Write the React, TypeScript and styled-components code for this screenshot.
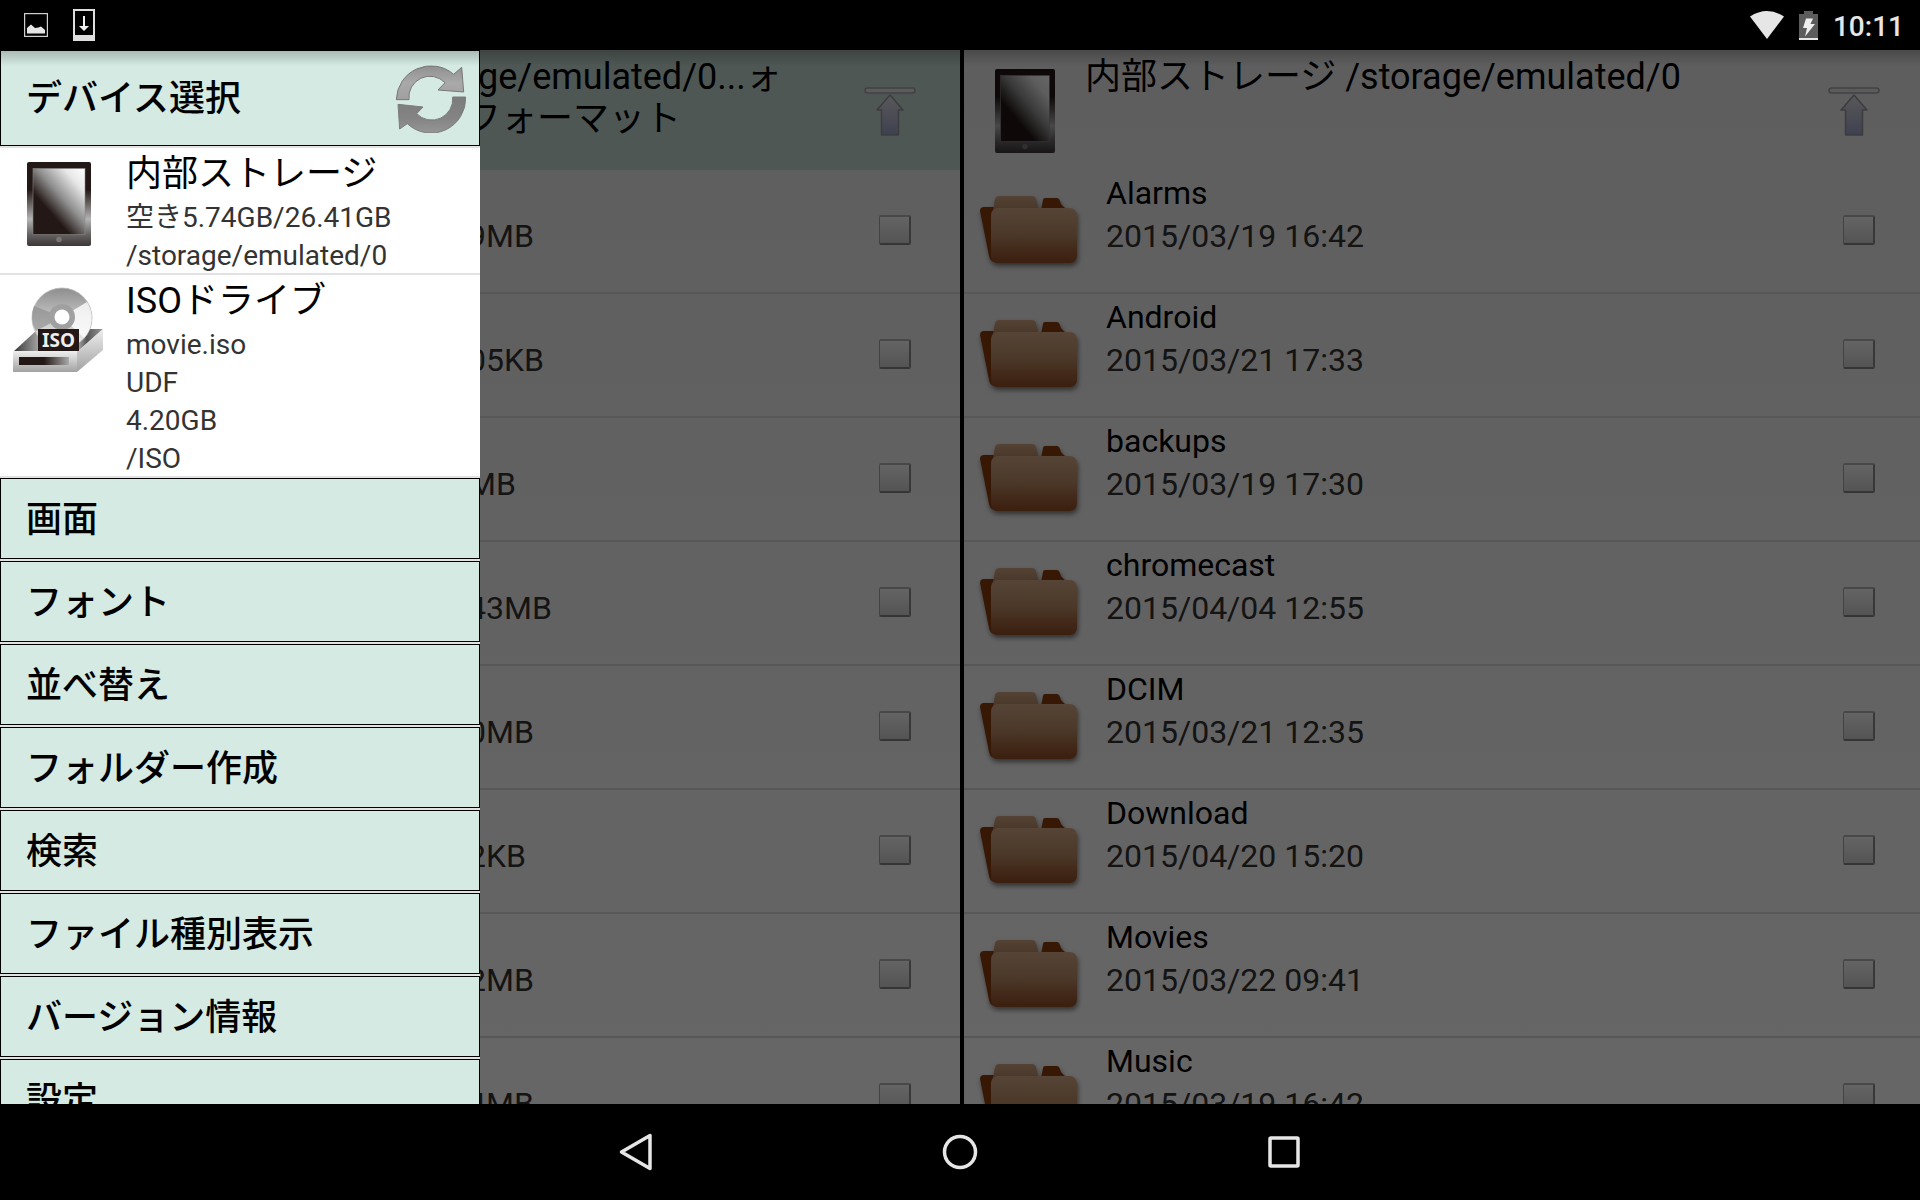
import React from "react";
import styled, { createGlobalStyle } from "styled-components";

const GlobalStyle = createGlobalStyle`
  * { box-sizing: border-box; }
  body { margin: 0; background: #000; overflow: hidden; }
  button { font: inherit; color: inherit; text-align: left; border: 0; padding: 0; background: none; }
`;

const Screen = styled.div`
  display: flex;
  flex-direction: column;
  height: 100vh;
  overflow: hidden;
  background: #000;
  color: #000;
  font-family: Roboto, "Noto Sans CJK JP", sans-serif;
`;

const StatusBar = styled.header`
  flex: none;
  display: flex;
  align-items: center;
  justify-content: space-between;
  height: 50px;
  padding: 0 16px 0 24px;
  color: #e6e6e6;
`;

const StatusGroup = styled.div<{ $gap: number }>`
  display: flex;
  align-items: center;
  gap: ${(p) => p.$gap}px;
  svg { display: block; }
`;

const Clock = styled.time`
  padding-top: 4px;
  font-size: 28px;
  line-height: 32px;
  font-weight: 500;
`;

const Stage = styled.main`
  position: relative;
  flex: 1;
  min-height: 0;
  display: flex;
  overflow: hidden;
  background: linear-gradient(#ebebeb, #fff);
`;

const Panel = styled.section<{ $divider?: boolean }>`
  flex: none;
  width: 50%;
  border-left: ${(p) => (p.$divider ? "4px solid #000" : "0")};
`;

const PanelHead = styled.div<{ $active?: boolean; $edge: number }>`
  display: flex;
  align-items: flex-start;
  height: 120px;
  padding-right: ${(p) => p.$edge - 4}px;
  background: ${(p) => (p.$active ? "#c4d9d1" : "transparent")};
`;

const HeadIcon = styled.div`
  flex: none;
  width: 121px;
  padding: 19px 0 0 31px;
`;

const HeadTitle = styled.h1<{ $covered?: boolean }>`
  flex: 1;
  margin: 0;
  padding-top: 6px;
  padding-left: ${(p) => (p.$covered ? "calc(25vw - 15px)" : "0")};
  text-indent: ${(p) => (p.$covered ? "13px" : "0")};
  font-size: 36px;
  line-height: 42px;
  font-weight: 400;
`;

const UpButton = styled.button`
  flex: none;
  margin-top: 36px;
  svg { display: block; }
`;

const List = styled.ul`
  list-style: none;
  margin: 0;
  padding: 0;
`;

const Row = styled.li<{ $edge: number }>`
  display: flex;
  align-items: flex-start;
  height: 124px;
  padding-right: ${(p) => p.$edge}px;
  border-bottom: 2px solid #dadada;
`;

const RowIcon = styled.div`
  flex: none;
  width: 142px;
  padding: 20px 0 0 11px;
`;

const RowText = styled.div<{ $covered?: boolean }>`
  flex: 1;
  padding-left: ${(p) => (p.$covered ? "calc(25vw - 12px)" : "0")};
  padding-top: ${(p) => (p.$covered ? 46 : 0)}px;
  font-size: 32px;
`;

const RowName = styled.div`
  line-height: 46px;
`;

const RowMeta = styled.div`
  color: #333;
  line-height: 40px;
`;

const Check = styled.input`
  appearance: none;
  flex: none;
  width: 32px;
  height: 30px;
  margin: 45px 0 0;
  border: 1px solid #a8a8a8;
  border-top: 2px solid #b4b4b4;
  border-right: 2px solid #8c8c8c;
  border-bottom: 2px solid #858585;
  border-radius: 2px;
  background: linear-gradient(#fafafa, #d2d2d2);
`;

const Scrim = styled.div`
  position: absolute;
  inset: 0;
  background: rgba(0, 0, 0, 0.6);
`;

const BarShadow = styled.div`
  position: absolute;
  inset: 0 0 auto;
  height: 16px;
  pointer-events: none;
  background: linear-gradient(rgba(0, 0, 0, 0.22), rgba(0, 0, 0, 0));
`;

const Drawer = styled.nav`
  position: absolute;
  inset: 0 auto 0 0;
  display: flex;
  flex-direction: column;
  width: 25%;
  overflow: hidden;
  background: #fff;
`;

const Divided = styled.div`
  flex: none;
  border-bottom: 2px solid #e2e2e4;
`;

const SectionHead = styled.div`
  display: flex;
  align-items: center;
  justify-content: space-between;
  height: 96px;
  padding: 0 12px 0 25px;
  border: 1px solid #000;
  background: #d4eae2;
  font-size: 36px;
  font-weight: 500;
  line-height: 44px;
  span { padding-top: 2px; }
  svg { display: block; }
`;

const MenuButton = styled.button`
  display: block;
  width: 100%;
  height: 81px;
  padding: 2px 25px 0;
  border: 1px solid #000;
  background: #d4eae2;
  font-size: 36px;
  font-weight: 500;
  line-height: 44px;
`;

const DeviceButton = styled.button`
  display: flex;
  align-items: flex-start;
  width: 100%;
`;

const DeviceIcon = styled.span<{ $inset: number }>`
  flex: none;
  width: 126px;
  padding: ${(p) => (p.$inset > 20 ? 14 : 10)}px 0 0 ${(p) => p.$inset}px;
  svg { display: block; }
`;

const DeviceText = styled.span`
  display: block;
  padding-top: 4px;
  margin-bottom: -2px;
`;

const DeviceName = styled.span`
  display: block;
  margin-bottom: 3px;
  font-size: 36px;
  line-height: 44px;
`;

const DeviceLine = styled.span`
  display: block;
  color: #333;
  font-size: 28px;
  line-height: 38px;
`;

const NavBar = styled.footer`
  flex: none;
  display: flex;
  align-items: center;
  justify-content: center;
  height: 96px;
`;

const NavButton = styled.button`
  display: flex;
  justify-content: center;
  width: 324px;
  svg { display: block; }
`;

function PictureIcon() {
  return (
    <svg width="24" height="24" viewBox="0 0 24 24" aria-hidden="true">
      <rect x="0.5" y="0.5" width="23" height="23" fill="none" stroke="#cfcfcf" strokeWidth="1.4" />
      <path d="M3 20.500V15L7 11.500L11 15L14.500 14.500L17 13.500L21 17V20.500Z" fill="#e6e6e6" />
    </svg>
  );
}

function DownloadIcon() {
  return (
    <svg width="22" height="32" viewBox="0 0 22 32" aria-hidden="true">
      <path d="M0 0H22V32H0Z M2 2V26H20V2Z" fillRule="evenodd" fill="#dedede" />
      <path d="M10 7H12V17H16L11 22L6 17H10Z" fill="#f0f0f0" />
    </svg>
  );
}

function WifiIcon() {
  return (
    <svg width="34" height="28" viewBox="0 0 34 28" aria-hidden="true">
      <path d="M0 5.500Q17 -5.500 34 5.500L17 28Z" fill="#e6e6e6" />
    </svg>
  );
}

function BatteryIcon() {
  return (
    <svg width="19" height="29" viewBox="0 0 19 29" aria-hidden="true">
      <path d="M5 0H14V3H19V29H0V3H5Z" fill="#5c5c5c" />
      <path d="M0 27H19V29H0Z" fill="#e6e6e6" />
      <path d="M7 7.500H14L11.500 13H16L6 25.500L8 17H4Z" fill="#eee" />
    </svg>
  );
}

function TabletIcon({ width }: { width: number }) {
  return (
    <svg width={width} height="84" viewBox="0 0 64 84" preserveAspectRatio="none" aria-hidden="true">
      <defs>
        <linearGradient id="tabletBody" x1="0" y1="0" x2="0" y2="1">
          <stop offset="0" stopColor="#231815" />
          <stop offset="0.33" stopColor="#231815" />
          <stop offset="0.68" stopColor="#b4b4b4" />
          <stop offset="0.86" stopColor="#686464" />
          <stop offset="1" stopColor="#3c3636" />
        </linearGradient>
        <linearGradient id="tabletGlass" x1="1" y1="0" x2="0.1" y2="1">
          <stop offset="0" stopColor="#fff" />
          <stop offset="0.2" stopColor="#e8e8e8" />
          <stop offset="0.46" stopColor="#8f8f8f" />
          <stop offset="0.7" stopColor="#231815" />
          <stop offset="1" stopColor="#231815" />
        </linearGradient>
      </defs>
      <rect width="64" height="84" rx="2" fill="url(#tabletBody)" />
      <rect x="6" y="6.500" width="52" height="66" fill="url(#tabletGlass)" stroke="#888" strokeWidth="0.6" />
      <circle cx="32" cy="77.500" r="2.800" fill="#7a7676" />
    </svg>
  );
}

function IsoIcon() {
  return (
    <svg width="94" height="90" viewBox="0 0 94 90" aria-hidden="true">
      <defs>
        <linearGradient id="disc" x1="0" y1="0" x2="0" y2="1">
          <stop offset="0" stopColor="#8e8e8e" />
          <stop offset="0.5" stopColor="#c4c4c4" />
          <stop offset="1" stopColor="#f4f4f4" />
        </linearGradient>
        <linearGradient id="driveFront" x1="0" y1="0" x2="0" y2="1">
          <stop offset="0" stopColor="#eee" />
          <stop offset="1" stopColor="#a2a2a2" />
        </linearGradient>
        <linearGradient id="driveSlot" x1="0" y1="0" x2="1" y2="0">
          <stop offset="0" stopColor="#231815" />
          <stop offset="0.5" stopColor="#231815" />
          <stop offset="1" stopColor="#aaa" />
        </linearGradient>
        <linearGradient id="driveTop" x1="0" y1="0" x2="1" y2="0">
          <stop offset="0" stopColor="#333" />
          <stop offset="0.3" stopColor="#aaa" />
          <stop offset="0.68" stopColor="#ccc" />
          <stop offset="0.82" stopColor="#555" />
          <stop offset="1" stopColor="#999" />
        </linearGradient>
      </defs>
      <path d="M3 67L28 44H93L67 67Z" fill="url(#driveTop)" />
      <circle cx="52" cy="33" r="30" fill="url(#disc)" stroke="#b8b8b8" strokeWidth="0.8" />
      <path d="M52 32L24 21A30 30 0 0 0 26 46Z" fill="#888" opacity="0.6" />
      <path d="M52 32L77 17A30 30 0 0 1 74 53Z" fill="#fff" opacity="0.8" />
      <circle cx="52" cy="32" r="13" fill="#a0a0a0" />
      <circle cx="52" cy="32" r="7.500" fill="#fff" />
      <path d="M67 67L93 44V65L67 87Z" fill="url(#driveFront)" />
      <path d="M3 66H67V87H3Z" fill="url(#driveFront)" />
      <path d="M9 72H59V80H9Z" fill="url(#driveSlot)" />
      <path d="M28 44H69V66H28Z" fill="#231815" />
      <text x="48.500" y="61.500" textAnchor="middle" fontSize="19" fontWeight="700" fontFamily="Noto Sans, sans-serif" fill="#eee">ISO</text>
    </svg>
  );
}

function RefreshIcon() {
  return (
    <svg width="72" height="70" viewBox="1186 188 216 210" aria-hidden="true">
      <defs>
        <linearGradient id="arrowTop" x1="0" y1="0" x2="0" y2="1">
          <stop offset="0" stopColor="#909090" />
          <stop offset="0.5" stopColor="#a9a9a9" />
          <stop offset="1" stopColor="#a0a0a0" />
        </linearGradient>
        <linearGradient id="arrowBottom" x1="0" y1="0" x2="0" y2="1">
          <stop offset="0" stopColor="#7b7b7b" />
          <stop offset="0.6" stopColor="#848484" />
          <stop offset="1" stopColor="#969696" />
        </linearGradient>
      </defs>
      <path
        d="M1190 298A104 104 0 0 1 1362 222L1386 201L1392 275L1315 269L1336 247A63 63 0 0 0 1228 298Z"
        fill="url(#arrowTop)"
        stroke="#777"
        strokeWidth="3"
      />
      <path
        d="M1398 290A104 104 0 0 1 1223 370L1200 386L1195 312L1270 320L1251 340A63 63 0 0 0 1359 290Z"
        fill="url(#arrowBottom)"
        stroke="#7c7c7c"
        strokeWidth="3"
      />
    </svg>
  );
}

function UpIcon() {
  return (
    <svg width="52" height="52" viewBox="0 0 52 52" aria-hidden="true">
      <defs>
        <linearGradient id="upFill" x1="0" y1="0" x2="0" y2="1">
          <stop offset="0" stopColor="#dfdfe4" />
          <stop offset="0.4" stopColor="#c3c5d6" />
          <stop offset="1" stopColor="#9ba2c8" />
        </linearGradient>
      </defs>
      <rect x="1" y="2" width="50" height="5" rx="2.500" fill="#e4e4ea" stroke="#a4a4a8" strokeWidth="1.500" />
      <path d="M26 9L39 24H34.500V49H17.500V24H13Z" fill="url(#upFill)" stroke="#96969e" strokeWidth="1.500" strokeLinejoin="round" />
    </svg>
  );
}

function FolderIcon() {
  return (
    <svg width="110" height="86" viewBox="0 0 110 86" aria-hidden="true">
      <defs>
        <linearGradient id="folderFront" x1="0" y1="0" x2="0" y2="1">
          <stop offset="0" stopColor="#d6ad89" />
          <stop offset="0.5" stopColor="#bb8b66" />
          <stop offset="0.72" stopColor="#a96c45" />
          <stop offset="1" stopColor="#944e27" />
        </linearGradient>
        <linearGradient id="folderTab" x1="0" y1="0" x2="0" y2="1">
          <stop offset="0" stopColor="#d2a885" />
          <stop offset="1" stopColor="#b58a68" />
        </linearGradient>
        <filter id="folderShadow" x="-10%" y="-10%" width="125%" height="130%">
          <feDropShadow dx="1" dy="3" stdDeviation="2.500" floodColor="#000" floodOpacity="0.5" />
        </filter>
      </defs>
      <g filter="url(#folderShadow)">
        <path d="M5 21Q5 17 9 17H24V73Q15 73 14 66Z" fill="#8a3d10" />
        <path d="M66 20L68 10Q68 8 70 8H82Q84 8 85 11L86 14Q88 17 93 20Z" fill="#8a3d10" />
        <path d="M18 20L20 9Q21 6 24 6H57Q60 6 61 9L64 20Z" fill="url(#folderTab)" />
        <rect x="16" y="18" width="86" height="55" rx="7" fill="url(#folderFront)" />
      </g>
    </svg>
  );
}

const sizes = ["9MB", "05KB", "MB", "43MB", "0MB", "2KB", "2MB", "4MB"];

const folders = [
  ["Alarms", "2015/03/19 16:42"],
  ["Android", "2015/03/21 17:33"],
  ["backups", "2015/03/19 17:30"],
  ["chromecast", "2015/04/04 12:55"],
  ["DCIM", "2015/03/21 12:35"],
  ["Download", "2015/04/20 15:20"],
  ["Movies", "2015/03/22 09:41"],
  ["Music", "2015/03/19 16:42"],
];

const devices = [
  {
    name: "内部ストレージ",
    lines: ["空き5.74GB/26.41GB", "/storage/emulated/0"],
    inset: 27,
    icon: <TabletIcon width={64} />,
  },
  {
    name: "ISOドライブ",
    lines: ["movie.iso", "UDF", "4.20GB", "/ISO"],
    inset: 10,
    icon: <IsoIcon />,
  },
];

const menu = [
  "画面",
  "フォント",
  "並べ替え",
  "フォルダー作成",
  "検索",
  "ファイル種別表示",
  "バージョン情報",
  "設定",
];

export default function App() {
  return (
    <Screen>
      <GlobalStyle />
      <StatusBar>
        <StatusGroup $gap={25}>
          <PictureIcon />
          <DownloadIcon />
        </StatusGroup>
        <StatusGroup $gap={15}>
          <WifiIcon />
          <BatteryIcon />
          <Clock>10:11</Clock>
        </StatusGroup>
      </StatusBar>

      <Stage>
        <Panel>
          <PanelHead $active $edge={48}>
            <HeadTitle $covered>
              ge/emulated/0...ォ
              <br />
              フォーマット
            </HeadTitle>
            <UpButton aria-label="上へ">
              <UpIcon />
            </UpButton>
          </PanelHead>
          <List>
            {sizes.map((size, i) => (
              <Row key={i} $edge={49}>
                <RowText $covered>
                  <RowMeta>{size}</RowMeta>
                </RowText>
                <Check type="checkbox" aria-label={size} />
              </Row>
            ))}
          </List>
        </Panel>

        <Panel $divider>
          <PanelHead $edge={44}>
            <HeadIcon>
              <TabletIcon width={60} />
            </HeadIcon>
            <HeadTitle>内部ストレージ /storage/emulated/0</HeadTitle>
            <UpButton aria-label="上へ">
              <UpIcon />
            </UpButton>
          </PanelHead>
          <List>
            {folders.map(([name, date]) => (
              <Row key={name} $edge={45}>
                <RowIcon>
                  <FolderIcon />
                </RowIcon>
                <RowText>
                  <RowName>{name}</RowName>
                  <RowMeta>{date}</RowMeta>
                </RowText>
                <Check type="checkbox" aria-label={name} />
              </Row>
            ))}
          </List>
        </Panel>

        <Scrim />
        <Drawer>
          <Divided>
            <SectionHead>
              <span>デバイス選択</span>
              <button aria-label="更新">
                <RefreshIcon />
              </button>
            </SectionHead>
          </Divided>
          {devices.map((device) => (
            <Divided key={device.name}>
              <DeviceButton>
                <DeviceIcon $inset={device.inset}>{device.icon}</DeviceIcon>
                <DeviceText>
                  <DeviceName>{device.name}</DeviceName>
                  {device.lines.map((line) => (
                    <DeviceLine key={line}>{line}</DeviceLine>
                  ))}
                </DeviceText>
              </DeviceButton>
            </Divided>
          ))}
          {menu.map((label) => (
            <Divided key={label}>
              <MenuButton>{label}</MenuButton>
            </Divided>
          ))}
        </Drawer>
        <BarShadow />
      </Stage>

      <NavBar>
        <NavButton aria-label="戻る">
          <svg width="36" height="38" viewBox="0 0 36 38" aria-hidden="true">
            <path d="M3.500 19L32 2.500V35.500Z" fill="none" stroke="#e6e6e6" strokeWidth="3.500" strokeLinejoin="round" />
          </svg>
        </NavButton>
        <NavButton aria-label="ホーム">
          <svg width="36" height="36" viewBox="0 0 36 36" aria-hidden="true">
            <circle cx="18" cy="18" r="15.500" fill="none" stroke="#e6e6e6" strokeWidth="3.500" />
          </svg>
        </NavButton>
        <NavButton aria-label="最近使ったアプリ">
          <svg width="32" height="32" viewBox="0 0 32 32" aria-hidden="true">
            <rect x="2" y="2" width="28" height="28" rx="1" fill="none" stroke="#e6e6e6" strokeWidth="3.500" />
          </svg>
        </NavButton>
      </NavBar>
    </Screen>
  );
}
